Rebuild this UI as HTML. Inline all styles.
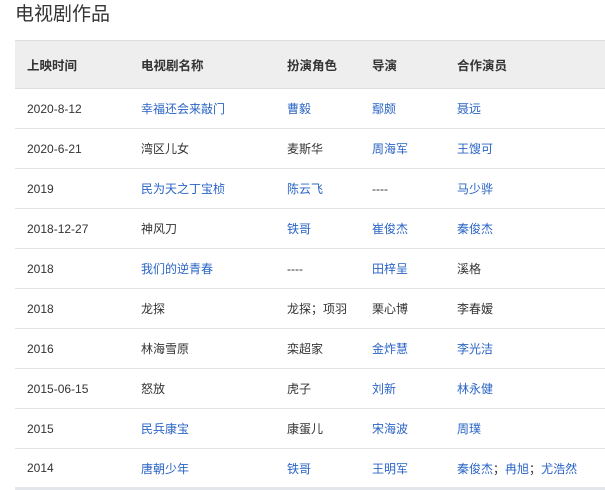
<!DOCTYPE html>
<html><head><meta charset="utf-8"><style>
*{margin:0;padding:0;box-sizing:border-box}
body{width:605px;height:488px;overflow:hidden;background:#fff;font-family:"Liberation Sans","Noto Sans CJK SC",sans-serif;color:#333}
h2{position:absolute;left:15px;top:2px;font-size:19px;font-weight:normal;color:#333;line-height:26px}
table{position:absolute;left:15px;top:40px;width:600px;border-collapse:collapse;font-size:12px}
th{background:#eee;height:48px;text-align:left;font-weight:bold;font-size:12.5px;color:#333;border-top:1px solid #ddd;border-bottom:1px solid #ddd}
td{height:40px;border-bottom:1px solid #e3e3e3;color:#333}
tr:last-child td{border-bottom:3px solid #e3e6ea}
th,td{padding:0}
th:nth-child(1),td:nth-child(1){padding-left:12px;width:126px}
th:nth-child(2),td:nth-child(2){width:146px}
th:nth-child(3),td:nth-child(3){width:85px}
th:nth-child(4),td:nth-child(4){width:85px}
a{color:#2a64c5;text-decoration:none}
</style></head><body>
<h2>电视剧作品</h2>
<table>
<tr><th>上映时间</th><th>电视剧名称</th><th>扮演角色</th><th>导演</th><th>合作演员</th></tr>
<tr><td>2020-8-12</td><td><a>幸福还会来敲门</a></td><td><a>曹毅</a></td><td><a>鄢颇</a></td><td><a>聂远</a></td></tr>
<tr><td>2020-6-21</td><td>湾区儿女</td><td>麦斯华</td><td><a>周海军</a></td><td><a>王馊可</a></td></tr>
<tr><td>2019</td><td><a>民为天之丁宝桢</a></td><td><a>陈云飞</a></td><td>----</td><td><a>马少骅</a></td></tr>
<tr><td>2018-12-27</td><td>神风刀</td><td><a>铁哥</a></td><td><a>崔俊杰</a></td><td><a>秦俊杰</a></td></tr>
<tr><td>2018</td><td><a>我们的逆青春</a></td><td>----</td><td><a>田梓呈</a></td><td>溪格</td></tr>
<tr><td>2018</td><td>龙探</td><td>龙探；项羽</td><td>栗心博</td><td>李春嫒</td></tr>
<tr><td>2016</td><td>林海雪原</td><td>栾超家</td><td><a>金炸慧</a></td><td><a>李光洁</a></td></tr>
<tr><td>2015-06-15</td><td>怒放</td><td>虎子</td><td><a>刘新</a></td><td><a>林永健</a></td></tr>
<tr><td>2015</td><td><a>民兵康宝</a></td><td>康蛋儿</td><td><a>宋海波</a></td><td><a>周璞</a></td></tr>
<tr><td>2014</td><td><a>唐朝少年</a></td><td><a>铁哥</a></td><td><a>王明军</a></td><td><a>秦俊杰</a>；<a>冉旭</a>；<a>尤浩然</a></td></tr>
</table>
</body></html>
